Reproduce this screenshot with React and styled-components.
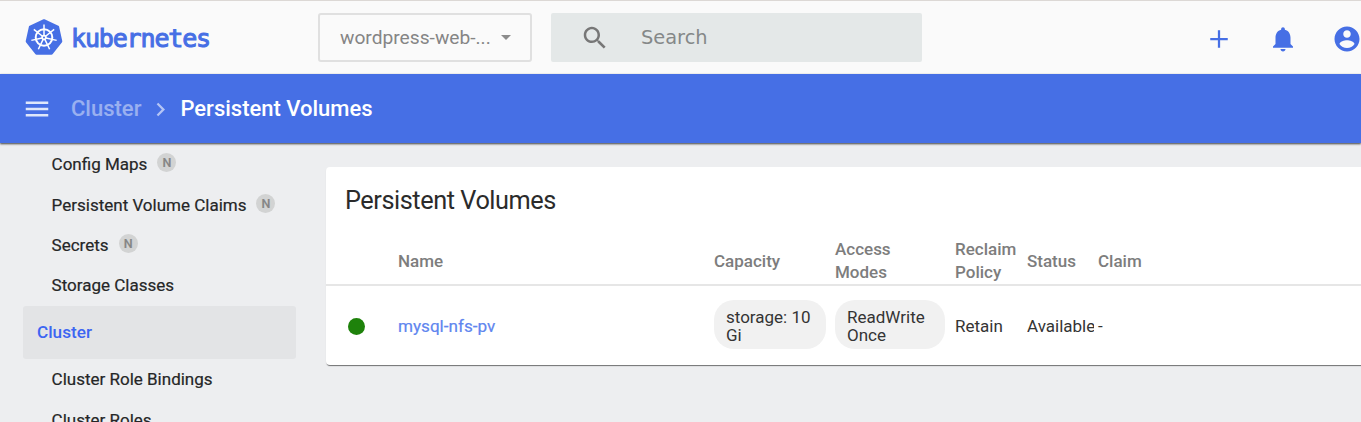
import React from "react";
import styled, { createGlobalStyle } from "styled-components";

const BLUE = "#466fe5";

const Global = createGlobalStyle`
  * { box-sizing: border-box; }
  body { margin: 0; background: #edeef0; font-family: Roboto, "Liberation Sans", sans-serif; overflow: hidden; }
`;

const Page = styled.div`
  height: 422px;
  display: flex;
  flex-direction: column;
  overflow: hidden;
`;

const Toolbar = styled.header`
  height: 74px;
  flex: none;
  display: flex;
  align-items: center;
  padding: 0 0 0 25px;
  background: #fafafa;
  border-top: 1px solid #dcd8d5;
`;

const Brand = styled.div`
  width: 293px;
  flex: none;
  display: flex;
  align-items: center;
  gap: 8px;
  padding-top: 1px;
  color: ${BLUE};
`;

const Wordmark = styled.span`
  padding-top: 2px;
  font: 400 25px/36px "DejaVu Sans Mono", monospace;
  letter-spacing: -1.15px;
  -webkit-text-stroke: 1px;
`;

const NamespaceSelect = styled.div`
  width: 214px;
  flex: none;
  height: 49px;
  display: flex;
  align-items: center;
  justify-content: space-between;
  padding: 0 19px 0 20px;
  border: 2px solid #e0e0e0;
  border-radius: 3px;
  color: #858585;
  font-size: 19.2px;
`;

const Caret = styled.span`
  margin-bottom: 1px;
  border: 5px solid transparent;
  border-top-color: #8c8c8c;
  border-bottom: 0;
`;

const SearchBox = styled.div`
  width: 371px;
  flex: none;
  height: 49px;
  margin-left: 19px;
  padding-left: 29px;
  display: flex;
  align-items: center;
  gap: 31px;
  border-radius: 2px;
  background: #e4e8e8;
  color: #858888;
  font: 19.4px "DejaVu Sans", sans-serif;
`;

const Actions = styled.div`
  flex: none;
  display: flex;
  align-items: center;
  gap: 34px;
  margin-left: 282px;
  padding-top: 2px;
`;

const Icon = styled.svg`
  flex: none;
  display: block;
  width: ${(p) => p.$size}px;
  height: ${(p) => p.$size}px;
  fill: ${(p) => p.$color || BLUE};
`;

const Crumbs = styled.nav`
  height: 69px;
  flex: none;
  z-index: 1;
  display: flex;
  align-items: center;
  padding: 1px 0 0 22px;
  background: ${BLUE};
  color: #fff;
  font-size: 22px;
  font-weight: 500;
  box-shadow: 0 1px 2px rgba(0, 0, 0, 0.75);
`;

const Crumb = styled.span`
  margin: 0 0 1px ${(p) => p.$gap}px;
  opacity: ${(p) => (p.$dim ? 0.45 : 1)};
`;

const Separator = styled.span`
  margin-left: 6px;
`;

const Body = styled.div`
  flex: 1;
  min-height: 0;
  display: flex;
`;

const Sidebar = styled.aside`
  width: 325px;
  flex: none;
  padding: 1px 30px 0 23px;
`;

const NavItem = styled.div`
  height: 40.4px;
  display: flex;
  align-items: center;
  gap: 10px;
  padding-left: 28.6px;
  color: #252627;
  font-size: 17px;
  -webkit-text-stroke: 0.2px;
  white-space: nowrap;
`;

const NavGroup = styled.div`
  height: 53.6px;
  width: 273px;
  display: flex;
  align-items: center;
  padding-left: 14px;
  border-radius: 3px;
  background: #e3e4e6;
  color: #3d66f2;
  font-size: 17.2px;
  font-weight: 500;
`;

const Badge = styled.span`
  width: 19px;
  height: 19px;
  margin-bottom: 3px;
  border-radius: 50%;
  background: #d2d3d3;
  color: #858585;
  text-align: center;
  font-size: 12.5px;
  line-height: 20px;
  font-weight: 500;
`;

const Card = styled.main`
  width: 1060px;
  height: 198px;
  flex: none;
  margin: 24px 0 0 1px;
  border-radius: 4px;
  background: #fff;
  box-shadow: 0 2px 1px -1px rgba(0, 0, 0, 0.45), 0 1px 1px rgba(0, 0, 0, 0.14);
`;

const Title = styled.h1`
  height: 67px;
  margin: 0;
  padding-left: 19px;
  color: #2b2b2b;
  font-size: 25.3px;
  letter-spacing: -0.45px;
  font-weight: 400;
  line-height: 67px;
`;

const TableRow = styled.div`
  display: grid;
  grid-template-columns: 53px 316px 121px 120px 72px 71px 1fr;
  align-items: center;
  padding: ${(p) => (p.$head ? 0 : 1)}px 0 0 19px;
  height: ${(p) => (p.$head ? 52 : 79)}px;
  color: ${(p) => (p.$head ? "#7d7d7d" : "#343434")};
  font-size: 17px;
  font-weight: ${(p) => (p.$head ? 500 : 400)};
  line-height: 23px;
  border-bottom: ${(p) => (p.$head ? "2px solid #e6e6e6" : "0")};
`;

const Heading = styled.span`
  padding-top: ${(p) => (p.$double ? 3 : 4)}px;
`;

const Clip = styled.span`
  width: 67px;
  overflow: hidden;
  white-space: nowrap;
`;

const Status = styled.span`
  width: 17px;
  height: 17px;
  margin-left: 3px;
  border-radius: 50%;
  background: #1e820b;
`;

const ResourceLink = styled.a`
  color: #6086ef;
  font-size: 17.1px;
  -webkit-text-stroke: 0.2px;
`;

const Chip = styled.span`
  width: ${(p) => p.$width}px;
  height: 49px;
  margin-bottom: 3px;
  padding: 9px 0 0 12px;
  border-radius: 20px;
  background: #f1f1f1;
  line-height: 17.5px;
`;

const wheelAngles = [0, 1, 2, 3, 4, 5, 6].map((n) => (n * 360) / 7);

const Logo = () => (
  <Icon $size={38} viewBox="-19 -18.5 38 38">
    <path
      d="M0-17 13.8-10.6 17 3.9 7.5 16H-7.5L-17 3.9-13.8-10.6Z"
      stroke={BLUE}
      strokeWidth="2.6"
      strokeLinejoin="round"
    />
    <g stroke="#fff" fill="none">
      <circle r="8.3" strokeWidth="2" />
      {wheelAngles.map((a) => (
        <path key={a} d="M0-2V-13" strokeWidth="1.5" transform={`rotate(${a})`} />
      ))}
    </g>
    <circle r="2.7" fill="#fff" />
    <circle r="1" />
  </Icon>
);

const navItems = [
  ["Config Maps", true],
  ["Persistent Volume Claims", true],
  ["Secrets", true],
  ["Storage Classes", false],
];

export default function App() {
  return (
    <Page>
      <Global />
      <Toolbar>
        <Brand>
          <Logo />
          <Wordmark>kubernetes</Wordmark>
        </Brand>
        <NamespaceSelect>
          <span>wordpress-web-...</span>
          <Caret />
        </NamespaceSelect>
        <SearchBox>
          <Icon $size={30} $color="#777" viewBox="0 0 24 24">
            <path d="M15.5 14h-.79l-.28-.27C15.41 12.59 16 11.11 16 9.5 16 5.91 13.09 3 9.5 3S3 5.91 3 9.5 5.91 16 9.5 16c1.61 0 3.09-.59 4.23-1.57l.27.28v.79l5 4.99L20.49 19l-4.99-5zm-6 0C7.01 14 5 11.99 5 9.5S7.01 5 9.5 5 14 7.01 14 9.5 11.99 14 9.5 14z" />
          </Icon>
          Search
        </SearchBox>
        <Actions>
          <Icon $size={30} viewBox="0 0 24 24">
            <path d="M19 12.9h-6.1V19h-1.8v-6.1H5v-1.8h6.1V5h1.8v6.1H19z" />
          </Icon>
          <Icon $size={30} viewBox="0 0 24 24">
            <path d="M12 22c1.1 0 2-.9 2-2h-4c0 1.1.89 2 2 2zm6-6v-5c0-3.07-1.64-5.64-4.5-6.32V4c0-.83-.67-1.5-1.5-1.5s-1.5.67-1.5 1.5v.68C7.63 5.36 6 7.92 6 11v5l-2 2v1h16v-1l-2-2z" />
          </Icon>
          <Icon $size={30} viewBox="0 0 24 24">
            <path d="M12 2C6.48 2 2 6.48 2 12s4.48 10 10 10 10-4.48 10-10S17.52 2 12 2zm0 3c1.66 0 3 1.34 3 3s-1.34 3-3 3-3-1.34-3-3 1.34-3 3-3zm0 14.2c-2.5 0-4.71-1.28-6-3.22.03-1.99 4-3.08 6-3.08 1.99 0 5.97 1.09 6 3.08-1.29 1.94-3.5 3.22-6 3.22z" />
          </Icon>
        </Actions>
      </Toolbar>
      <Crumbs>
        <Icon $size={30} $color="#dfe7fb" viewBox="0 0 24 24">
          <path d="M3 18h18v-2H3v2zm0-5h18v-2H3v2zm0-7v2h18V6H3z" />
        </Icon>
        <Crumb $dim $gap={19}>Cluster</Crumb>
        <Separator>
          <Icon $size={27} $color="#b5c5f5" viewBox="0 0 24 24">
            <path d="M10 6 8.59 7.41 13.17 12l-4.58 4.59L10 18l6-6z" />
          </Icon>
        </Separator>
        <Crumb $gap={6}>Persistent Volumes</Crumb>
      </Crumbs>
      <Body>
        <Sidebar>
          {navItems.map(([label, namespaced]) => (
            <NavItem key={label}>
              {label}
              {namespaced && <Badge>N</Badge>}
            </NavItem>
          ))}
          <NavGroup>Cluster</NavGroup>
          <NavItem>Cluster Role Bindings</NavItem>
          <NavItem>Cluster Roles</NavItem>
        </Sidebar>
        <Card>
          <Title>Persistent Volumes</Title>
          <TableRow $head>
            <span />
            <Heading>Name</Heading>
            <Heading>Capacity</Heading>
            <Heading $double>Access<br />Modes</Heading>
            <Heading $double>Reclaim<br />Policy</Heading>
            <Heading>Status</Heading>
            <Heading>Claim</Heading>
          </TableRow>
          <TableRow>
            <Status />
            <ResourceLink>mysql-nfs-pv</ResourceLink>
            <Chip $width={112}>storage: 10<br />Gi</Chip>
            <Chip $width={110}>ReadWrite<br />Once</Chip>
            <span>Retain</span>
            <Clip>Available</Clip>
            <span>-</span>
          </TableRow>
        </Card>
      </Body>
    </Page>
  );
}
